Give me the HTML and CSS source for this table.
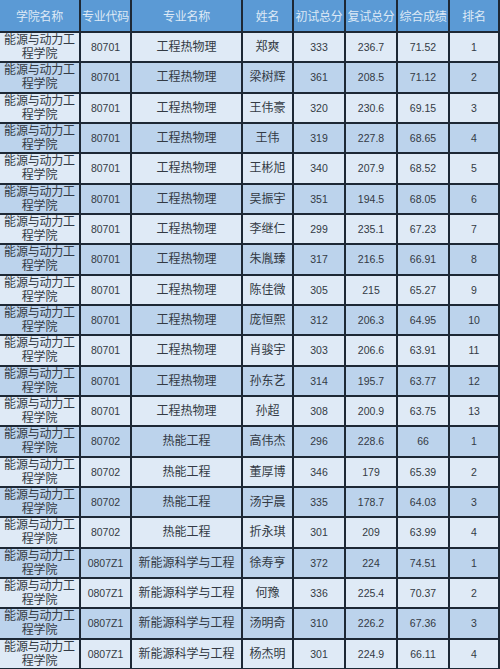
FILE: index.html
```html
<!DOCTYPE html>
<html lang="zh">
<head>
<meta charset="utf-8">
<title>成绩表</title>
<link rel="stylesheet" href="styles.css">
</head>
<body>
<div class="table">
  <div class="h">学院名称</div><div class="h">专业代码</div><div class="h">专业名称</div><div class="h">姓名</div><div class="h">初试总分</div><div class="h">复试总分</div><div class="h">综合成绩</div><div class="h">排名</div>

  <div class="c l col">能源与动力工程学院</div><div class="c l n">80701</div><div class="c l">工程热物理</div><div class="c l">郑爽</div><div class="c l n">333</div><div class="c l n">236.7</div><div class="c l n">71.52</div><div class="c l n">1</div>
  <div class="c d col">能源与动力工程学院</div><div class="c d n">80701</div><div class="c d">工程热物理</div><div class="c d">梁树辉</div><div class="c d n">361</div><div class="c d n">208.5</div><div class="c d n">71.12</div><div class="c d n">2</div>
  <div class="c l col">能源与动力工程学院</div><div class="c l n">80701</div><div class="c l">工程热物理</div><div class="c l">王伟豪</div><div class="c l n">320</div><div class="c l n">230.6</div><div class="c l n">69.15</div><div class="c l n">3</div>
  <div class="c d col">能源与动力工程学院</div><div class="c d n">80701</div><div class="c d">工程热物理</div><div class="c d">王伟</div><div class="c d n">319</div><div class="c d n">227.8</div><div class="c d n">68.65</div><div class="c d n">4</div>
  <div class="c l col">能源与动力工程学院</div><div class="c l n">80701</div><div class="c l">工程热物理</div><div class="c l">王彬旭</div><div class="c l n">340</div><div class="c l n">207.9</div><div class="c l n">68.52</div><div class="c l n">5</div>
  <div class="c d col">能源与动力工程学院</div><div class="c d n">80701</div><div class="c d">工程热物理</div><div class="c d">吴振宇</div><div class="c d n">351</div><div class="c d n">194.5</div><div class="c d n">68.05</div><div class="c d n">6</div>
  <div class="c l col">能源与动力工程学院</div><div class="c l n">80701</div><div class="c l">工程热物理</div><div class="c l">李继仁</div><div class="c l n">299</div><div class="c l n">235.1</div><div class="c l n">67.23</div><div class="c l n">7</div>
  <div class="c d col">能源与动力工程学院</div><div class="c d n">80701</div><div class="c d">工程热物理</div><div class="c d">朱胤臻</div><div class="c d n">317</div><div class="c d n">216.5</div><div class="c d n">66.91</div><div class="c d n">8</div>
  <div class="c l col">能源与动力工程学院</div><div class="c l n">80701</div><div class="c l">工程热物理</div><div class="c l">陈佳微</div><div class="c l n">305</div><div class="c l n">215</div><div class="c l n">65.27</div><div class="c l n">9</div>
  <div class="c d col">能源与动力工程学院</div><div class="c d n">80701</div><div class="c d">工程热物理</div><div class="c d">庞恒熙</div><div class="c d n">312</div><div class="c d n">206.3</div><div class="c d n">64.95</div><div class="c d n">10</div>
  <div class="c l col">能源与动力工程学院</div><div class="c l n">80701</div><div class="c l">工程热物理</div><div class="c l">肖骏宇</div><div class="c l n">303</div><div class="c l n">206.6</div><div class="c l n">63.91</div><div class="c l n">11</div>
  <div class="c d col">能源与动力工程学院</div><div class="c d n">80701</div><div class="c d">工程热物理</div><div class="c d">孙东艺</div><div class="c d n">314</div><div class="c d n">195.7</div><div class="c d n">63.77</div><div class="c d n">12</div>
  <div class="c l col">能源与动力工程学院</div><div class="c l n">80701</div><div class="c l">工程热物理</div><div class="c l">孙超</div><div class="c l n">308</div><div class="c l n">200.9</div><div class="c l n">63.75</div><div class="c l n">13</div>
  <div class="c d col">能源与动力工程学院</div><div class="c d n">80702</div><div class="c d">热能工程</div><div class="c d">高伟杰</div><div class="c d n">296</div><div class="c d n">228.6</div><div class="c d n">66</div><div class="c d n">1</div>
  <div class="c l col">能源与动力工程学院</div><div class="c l n">80702</div><div class="c l">热能工程</div><div class="c l">董厚博</div><div class="c l n">346</div><div class="c l n">179</div><div class="c l n">65.39</div><div class="c l n">2</div>
  <div class="c d col">能源与动力工程学院</div><div class="c d n">80702</div><div class="c d">热能工程</div><div class="c d">汤宇晨</div><div class="c d n">335</div><div class="c d n">178.7</div><div class="c d n">64.03</div><div class="c d n">3</div>
  <div class="c l col">能源与动力工程学院</div><div class="c l n">80702</div><div class="c l">热能工程</div><div class="c l">折永琪</div><div class="c l n">301</div><div class="c l n">209</div><div class="c l n">63.99</div><div class="c l n">4</div>
  <div class="c d col">能源与动力工程学院</div><div class="c d n">0807Z1</div><div class="c d">新能源科学与工程</div><div class="c d">徐寿亨</div><div class="c d n">372</div><div class="c d n">224</div><div class="c d n">74.51</div><div class="c d n">1</div>
  <div class="c l col">能源与动力工程学院</div><div class="c l n">0807Z1</div><div class="c l">新能源科学与工程</div><div class="c l">何豫</div><div class="c l n">336</div><div class="c l n">225.4</div><div class="c l n">70.37</div><div class="c l n">2</div>
  <div class="c d col">能源与动力工程学院</div><div class="c d n">0807Z1</div><div class="c d">新能源科学与工程</div><div class="c d">汤明奇</div><div class="c d n">310</div><div class="c d n">226.2</div><div class="c d n">67.36</div><div class="c d n">3</div>
  <div class="c l col">能源与动力工程学院</div><div class="c l n">0807Z1</div><div class="c l">新能源科学与工程</div><div class="c l">杨杰明</div><div class="c l n">301</div><div class="c l n">224.9</div><div class="c l n">66.11</div><div class="c l n">4</div>
</div>
</body>
</html>
```
FILE: styles.css
```css
html, body {
  margin: 0;
  padding: 0;
  background: #1d2835;
  overflow: hidden;
}
.table {
  width: 500px;
  height: 669px;
  box-sizing: border-box;
  padding: 0 2px 1px 0;
  display: grid;
  grid-template-columns: 79px 49px 109px 49px 50px 50px 50px 1fr;
  grid-template-rows: 31px repeat(21, minmax(0, 1fr));
  gap: 2px;
  background: #1d2835;
  font-family: "Liberation Sans", "Noto Sans CJK SC", sans-serif;
}
.h {
  background: #5b9ad5;
  color: #dde9f6;
  font-size: 12px;
  display: flex;
  align-items: center;
  justify-content: center;
  white-space: nowrap;
  letter-spacing: -0.3px;
}
.c {
  display: flex;
  align-items: center;
  justify-content: center;
  text-align: center;
  color: #333a44;
  font-size: 12px;
  line-height: 14px;
  white-space: nowrap;
  overflow: hidden;
  min-height: 0;
}
.c.col {
  white-space: normal;
  padding: 0 3px;
  letter-spacing: -0.2px;
}
.c.n {
  font-size: 10.5px;
}
.l {
  background: #dfeaf6;
}
.d {
  background: #bcd3ec;
}
```
